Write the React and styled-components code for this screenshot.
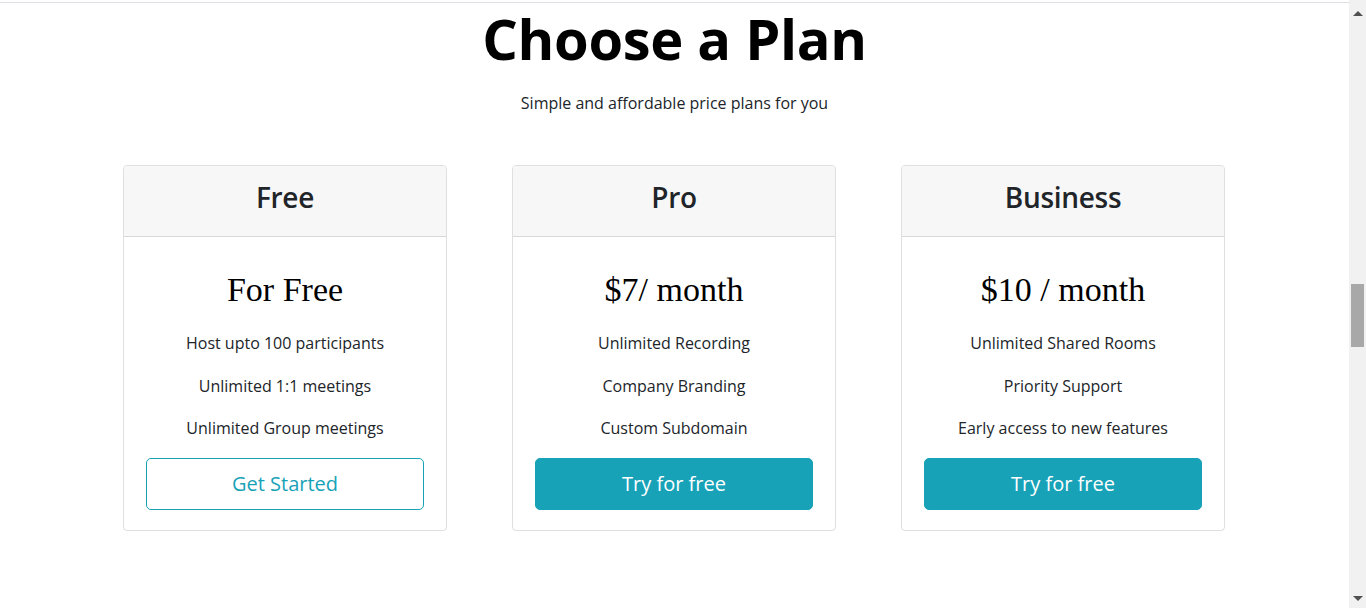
import React from "react";
import styled, { createGlobalStyle } from "styled-components";

const GlobalStyle = createGlobalStyle`
  html, body {
    margin: 0;
    padding: 0;
    height: 608px;
    overflow: hidden;
    background: #fff;
  }
  * { box-sizing: border-box; }
`;

const Shell = styled.div`
  display: flex;
  height: 608px;
  width: 1366px;
`;

const Page = styled.main`
  flex: 1;
  display: flex;
  flex-direction: column;
  align-items: center;
  font-family: "Open Sans", "Noto Sans", sans-serif;
  color: #212529;
`;

const Divider = styled.div`
  align-self: stretch;
  height: 1px;
  margin-top: 2px;
  background: #dee2e6;
`;

const Heading = styled.h1`
  margin: 2px 0 0;
  font-family: "Open Sans", sans-serif;
  font-weight: 700;
  font-size: 56px;
  line-height: 1.2;
  letter-spacing: -0.3px;
  color: #000;
`;

const Lead = styled.p`
  margin: 19px 0 0;
  font-size: 16px;
  line-height: 24px;
`;

const Plans = styled.section`
  display: flex;
  gap: 65px;
  margin-top: 50px;
  margin-left: -1px;
`;

const Card = styled.div`
  width: 324px;
  border: 1px solid rgba(0, 0, 0, 0.125);
  border-radius: 4px;
  overflow: hidden;
  display: flex;
  flex-direction: column;
`;

const CardHeader = styled.div`
  height: 71px;
  padding-bottom: 6px;
  display: flex;
  align-items: center;
  justify-content: center;
  background: #f7f7f7;
  border-bottom: 1px solid rgba(0, 0, 0, 0.125);
`;

const PlanName = styled.h3`
  margin: 0;
  font-size: 28px;
  font-weight: 600;
  line-height: 1.2;
  letter-spacing: -0.3px;
  color: #212529;
`;

const CardBody = styled.div`
  display: flex;
  flex-direction: column;
  align-items: center;
  padding: 32px 22px 20px;
`;

const Price = styled.div`
  font-family: "Liberation Serif", "Times New Roman", serif;
  font-size: 34px;
  line-height: 41px;
  color: #000;
  margin-bottom: 21px;
`;

const Features = styled.ul`
  list-style: none;
  margin: 0 0 17.5px;
  padding: 0;
  display: flex;
  flex-direction: column;
  align-items: center;
  gap: 18.5px;
`;

const Feature = styled.li`
  font-size: 16px;
  line-height: 24px;
`;

const Button = styled.button`
  width: 100%;
  height: 52px;
  border-radius: 5px;
  font-family: "Open Sans", sans-serif;
  font-size: 20px;
  cursor: pointer;
  border: 1px solid #17a2b8;
  background: ${(p) => (p.$outline ? "#fff" : "#17a2b8")};
  color: ${(p) => (p.$outline ? "#17a2b8" : "#fff")};
`;

const Scrollbar = styled.div`
  width: 17px;
  background: #f1f1f1;
  display: flex;
  flex-direction: column;
  align-items: center;
  justify-content: space-between;
  padding: 11px 0 7px;
  position: relative;
`;

const Arrow = styled.div`
  width: 0;
  height: 0;
  border-left: 5px solid transparent;
  border-right: 5px solid transparent;
  ${(p) =>
    p.$down
      ? "border-top: 5px solid #505050;"
      : "border-bottom: 5px solid #505050;"}
`;

const Thumb = styled.div`
  position: absolute;
  left: 2px;
  top: 284px;
  width: 13px;
  height: 63px;
  background: #a8a8a8;
`;

const plans = [
  {
    name: "Free",
    price: "For Free",
    features: [
      "Host upto 100 participants",
      "Unlimited 1:1 meetings",
      "Unlimited Group meetings",
    ],
    cta: "Get Started",
    outline: true,
  },
  {
    name: "Pro",
    price: "$7/ month",
    features: ["Unlimited Recording", "Company Branding", "Custom Subdomain"],
    cta: "Try for free",
  },
  {
    name: "Business",
    price: "$10 / month",
    features: [
      "Unlimited Shared Rooms",
      "Priority Support",
      "Early access to new features",
    ],
    cta: "Try for free",
  },
];

export default function App() {
  return (
    <Shell>
      <GlobalStyle />
      <Page>
        <Divider />
        <Heading>Choose a Plan</Heading>
        <Lead>Simple and affordable price plans for you</Lead>
        <Plans>
          {plans.map((plan) => (
            <Card key={plan.name}>
              <CardHeader>
                <PlanName>{plan.name}</PlanName>
              </CardHeader>
              <CardBody>
                <Price>{plan.price}</Price>
                <Features>
                  {plan.features.map((f) => (
                    <Feature key={f}>{f}</Feature>
                  ))}
                </Features>
                <Button $outline={plan.outline}>{plan.cta}</Button>
              </CardBody>
            </Card>
          ))}
        </Plans>
      </Page>
      <Scrollbar>
        <Arrow />
        <Thumb />
        <Arrow $down />
      </Scrollbar>
    </Shell>
  );
}
